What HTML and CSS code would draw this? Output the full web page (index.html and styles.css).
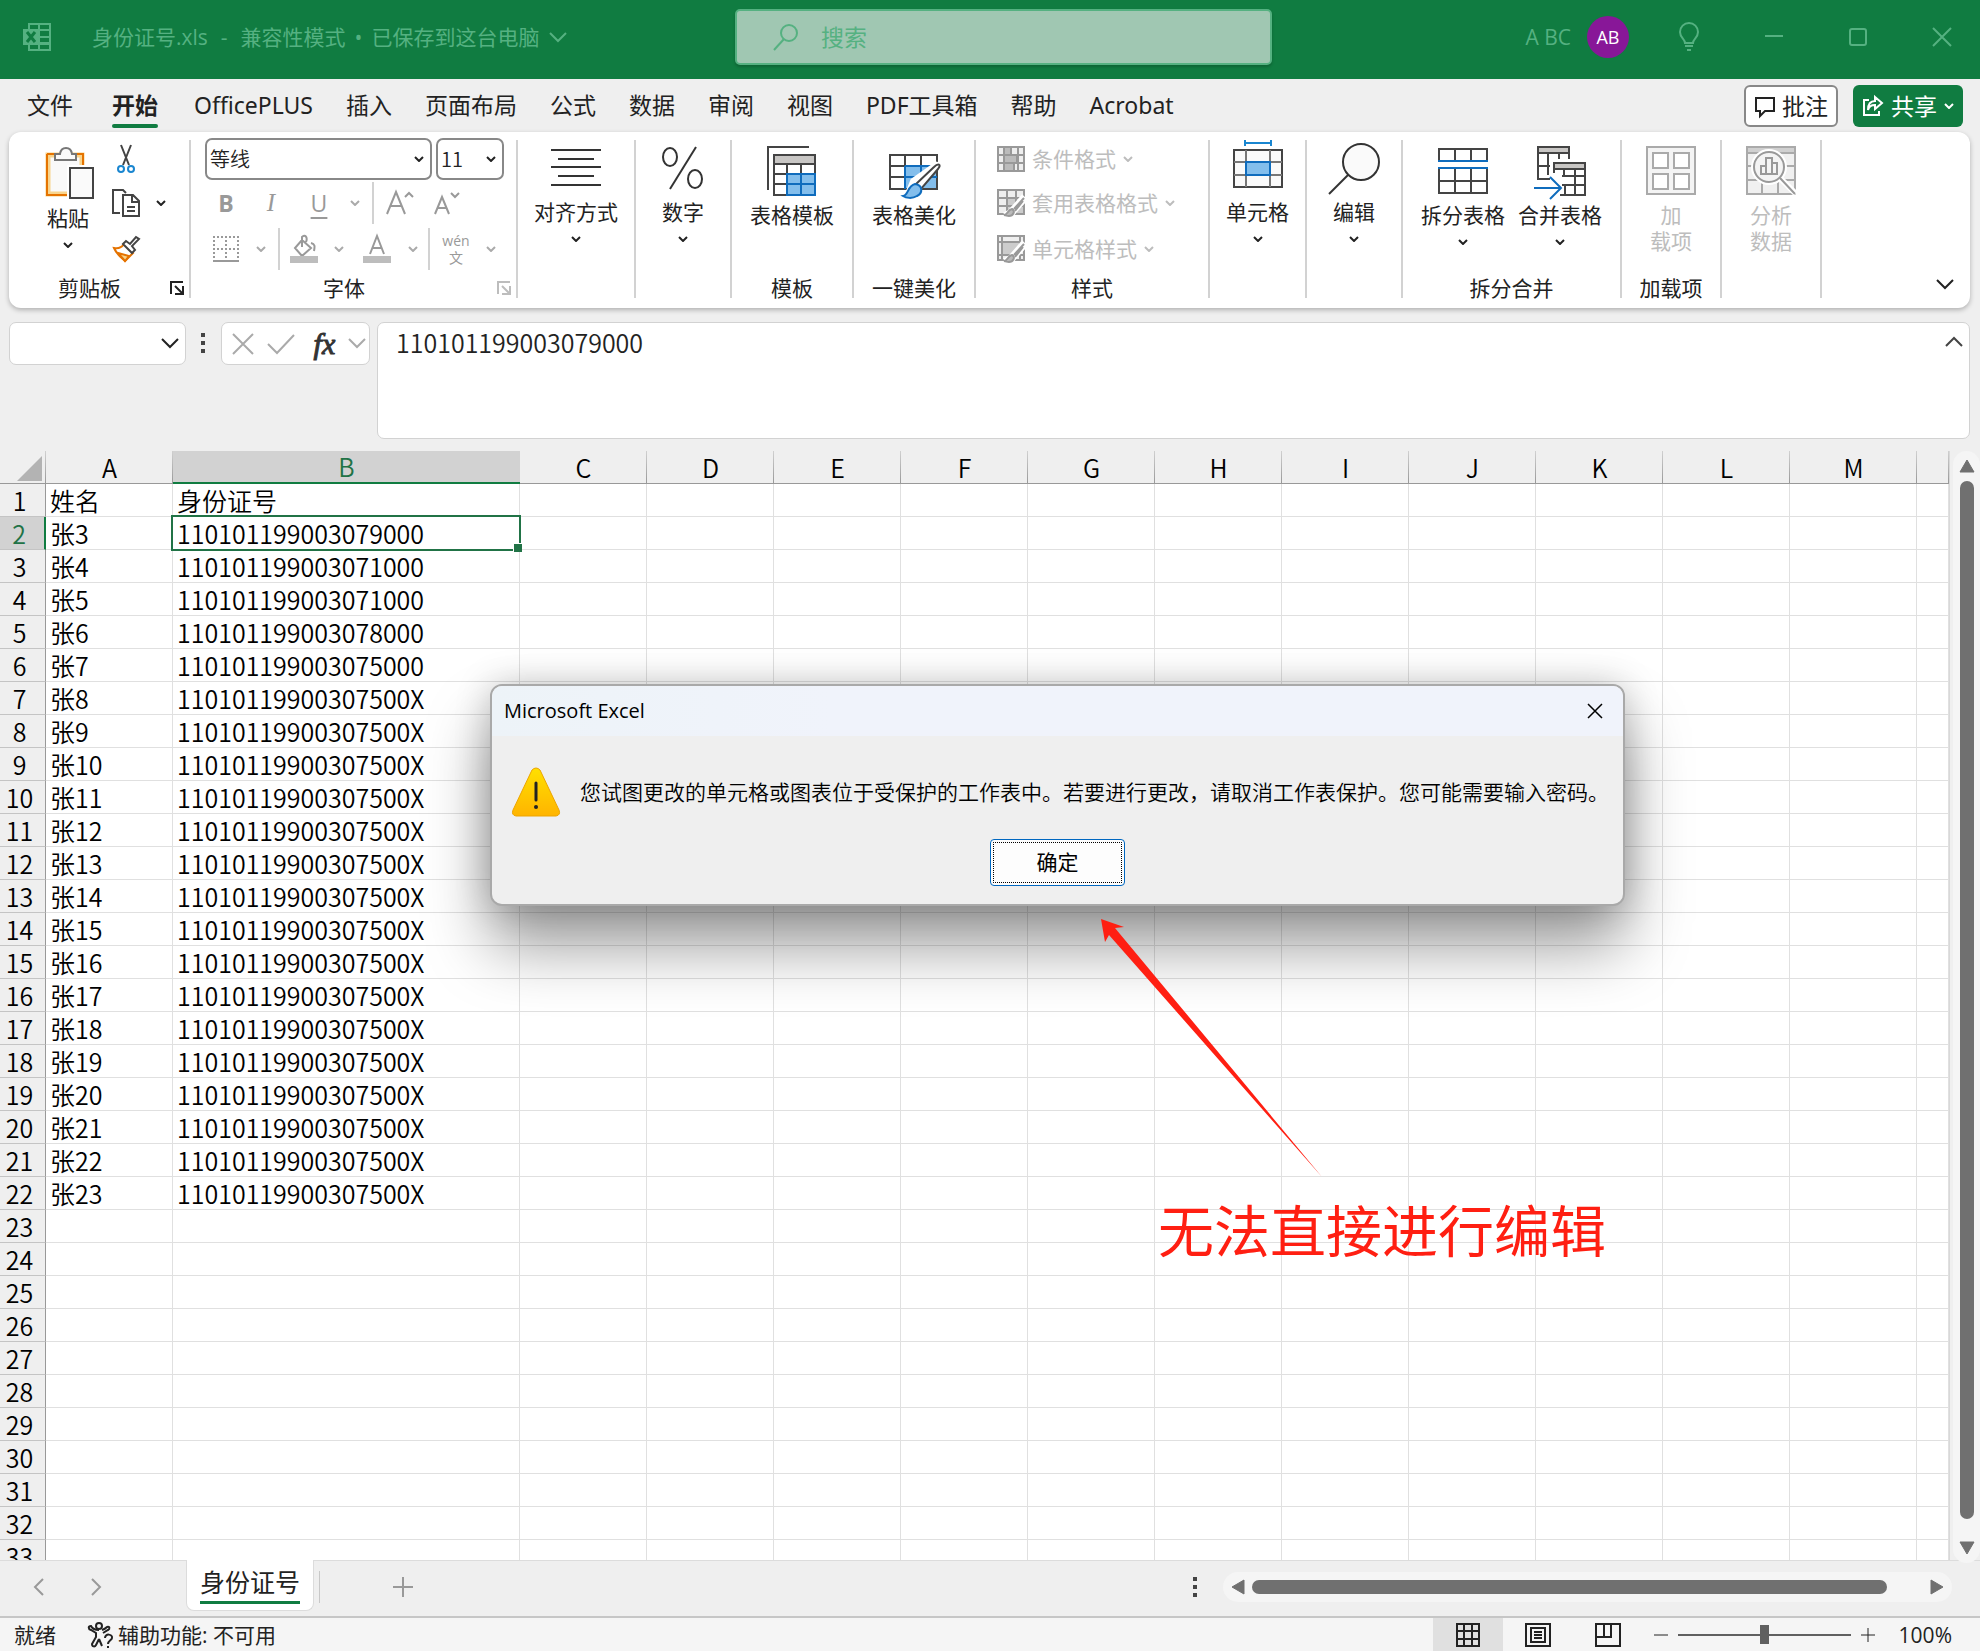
FILE: index.html
```html
<!DOCTYPE html>
<html lang="zh-CN">
<head>
<meta charset="utf-8">
<meta name="viewport" content="width=device-width, initial-scale=1">
<title>身份证号.xls</title>
<link rel="stylesheet" href="styles.css">
</head>
<body>
<svg class="defs" aria-hidden="true">
  <symbol id="chev" viewBox="0 0 10 6"><path d="M1 1l4 4 4-4" fill="none" stroke="currentColor" stroke-width="2"/></symbol>
  <symbol id="chev-wide" viewBox="0 0 18 11"><path d="M1 1l8 8 8-8" fill="none" stroke="currentColor" stroke-width="2"/></symbol>
  <symbol id="launch" viewBox="0 0 14 14"><path d="M1 13V1h12M5 5l7 7M13 5v8H5" fill="none" stroke="currentColor" stroke-width="2"/></symbol>
</svg>
<div class="app">
  <header class="titlebar">
    <svg class="logo" width="30" height="30" viewBox="0 0 30 30" fill="none" stroke="#55b181" stroke-width="2"><path d="M7 7V2h21v26H7v-6M17 2v26M7 8h21M17 15h11M17 21h11M7 22h21"/><path d="M1 7h16v16H1z" fill="#55b181" stroke="none"/><path d="M5 10l8 10M13 10L5 20" stroke="#107c41" stroke-width="3"/></svg>
    <div class="doc"><span>身份证号.xls</span><span class="dash">-</span><span>兼容性模式</span><span>•</span><span>已保存到这台电脑</span><svg width="18" height="11"><use href="#chev-wide"/></svg></div>
    <label class="search"><svg width="26" height="28" viewBox="0 0 26 28" fill="none" stroke="currentColor" stroke-width="2"><circle cx="16" cy="10" r="8"/><path d="M11 16L1 27"/></svg><input type="text" placeholder="搜索" aria-label="搜索"></label>
    <div class="account"><span>A BC</span><span class="avatar">AB</span>
      <button aria-label="提示"><svg width="22" height="30" viewBox="0 0 22 30" fill="none" stroke="currentColor" stroke-width="2"><path d="M7 21c0-4-5-5-5-11a9 9 0 0 1 18 0c0 6-5 7-5 11zM7 24h8M9 28h4"/></svg></button>
    </div>
    <div class="window">
      <button aria-label="最小化"><svg width="20" height="20" viewBox="0 0 20 20"><path d="M1 9h18" stroke="currentColor" stroke-width="2"/></svg></button>
      <button aria-label="最大化"><svg width="20" height="20" viewBox="0 0 20 20"><rect x="2" y="2" width="16" height="16" rx="2" fill="none" stroke="currentColor" stroke-width="2"/></svg></button>
      <button aria-label="关闭"><svg width="20" height="20" viewBox="0 0 20 20"><path d="M1 1l18 18M19 1L1 19" stroke="currentColor" stroke-width="2"/></svg></button>
    </div>
  </header>

  <nav class="tabs">
    <a href="#">文件</a><a href="#" class="active">开始</a><a href="#">OfficePLUS</a><a href="#">插入</a><a href="#">页面布局</a><a href="#">公式</a><a href="#">数据</a><a href="#">审阅</a><a href="#">视图</a><a href="#">PDF工具箱</a><a href="#">帮助</a><a href="#">Acrobat</a>
    <div class="actions">
      <button class="comment"><svg width="22" height="22" viewBox="0 0 22 22" fill="none" stroke="currentColor" stroke-width="2"><path d="M2 3h18v13h-9l-5 5v-5H2z"/></svg>批注</button>
      <button class="share"><svg width="22" height="22" viewBox="0 0 22 22" fill="none" stroke="currentColor" stroke-width="2"><path d="M7 5H2v15h15v-4M13 2l7 6-7 6v-4c-4 0-6 1-7 5 0-6 2-9 7-9z"/></svg>共享<svg width="10" height="6"><use href="#chev"/></svg></button>
    </div>
  </nav>

  <section class="ribbon">
    <div class="group clip">
      <div class="controls">
        <button class="big paste"><svg class="pic" width="60" height="58" viewBox="0 0 60 58"><path d="M10 15h34v39H10z" fill="#f9f9f9" stroke="#f8d48c" stroke-width="5"/><path d="M9 14h36v12M30 55H9V14" fill="none" stroke="#e57300" stroke-width="2"/><path d="M17 20v-6h5c1-8 11-8 12 0h4v6z" fill="#fafafa" stroke="#777" stroke-width="2"/><path d="M32 28h23v30H32z" fill="#fafafa" stroke="#fff" stroke-width="6"/><path d="M32 28h23v30H32z" fill="#fafafa" stroke="#444" stroke-width="2"/></svg><span>粘贴</span><svg width="10" height="6"><use href="#chev"/></svg></button>
        <div class="rows">
          <button aria-label="剪切"><svg width="28" height="28" viewBox="0 0 28 28" fill="none" stroke="#444" stroke-width="2"><path d="M9 0l8 20M19 0l-8 20"/><circle cx="9" cy="24" r="3" stroke="#1a86d0"/><circle cx="19" cy="24" r="3" stroke="#1a86d0"/></svg></button>
          <button aria-label="复制"><svg width="28" height="28" viewBox="0 0 28 28" fill="none" stroke="#444" stroke-width="2"><path d="M8 24H1V1h10l3 3M11 6h10l6 6v15H11zM20 6v7h7M15 18h8M15 22h8"/></svg><svg width="10" height="6"><use href="#chev"/></svg></button>
          <button aria-label="格式刷"><svg width="28" height="28" viewBox="0 0 28 28" stroke-width="2"><path d="M2 13c5 1 8-1 10-4l9 9c-3 3-5 5-8 8C9 22 5 20 2 13z" fill="#fff" stroke="#e57300"/><path d="M6 18l11 3-4 5z" fill="#f8d48c" stroke="#e57300"/><path d="M11 9l3-3 4 3 6-7 3 2-7 7 3 4-3 3z" fill="#fff" stroke="#444"/></svg></button>
        </div>
      </div>
      <div class="foot"><span>剪贴板</span><button aria-label="剪贴板设置"><svg width="14" height="14"><use href="#launch"/></svg></button></div>
    </div>

    <div class="group font">
      <div class="rows">
        <div class="boxes">
          <div class="combo name"><input type="text" value="等线" aria-label="字体"><svg width="10" height="6"><use href="#chev"/></svg></div>
          <div class="combo size"><input type="text" value="11" aria-label="字号"><svg width="10" height="6"><use href="#chev"/></svg></div>
        </div>
        <div class="line2">
          <button class="b">B</button><button class="i">I</button><button class="u">U</button><svg width="10" height="6"><use href="#chev"/></svg><i class="bar"></i>
          <button aria-label="增大字号"><svg width="28" height="26" viewBox="0 0 28 26" fill="none" stroke="currentColor" stroke-width="2"><path d="M1 24L10 2l9 22M4 16h12M19 7l4-4 4 4"/></svg></button>
          <button aria-label="减小字号"><svg width="28" height="26" viewBox="0 0 28 26" fill="none" stroke="currentColor" stroke-width="2"><path d="M3 24L10 7l7 17M5 18h10M19 3l4 4 4-4"/></svg></button>
        </div>
        <div class="line3">
          <button aria-label="边框"><svg width="28" height="28" viewBox="0 0 28 28" fill="none" stroke="currentColor" stroke-width="2"><path d="M1 2h26M2 1v24M26 1v24M14 1v24M1 14h26" stroke-dasharray="2 2"/><path d="M1 26h26"/></svg></button><svg width="10" height="6"><use href="#chev"/></svg><i class="bar"></i>
          <button aria-label="填充颜色"><svg width="28" height="28" viewBox="0 0 28 28" fill="none" stroke="currentColor" stroke-width="2"><path d="M12 5l9 8-9 8-7-8zM12 12V2c3-3 6 0 4 5M21 8c4 1 4 3 3 8"/><path d="M0 21h28v7H0z" fill="#bdbdbd" stroke="none"/></svg></button><svg width="10" height="6"><use href="#chev"/></svg>
          <button aria-label="字体颜色"><svg width="28" height="28" viewBox="0 0 28 28" fill="none" stroke="currentColor" stroke-width="2"><path d="M7 19L14 1l7 18M9 13h10"/><path d="M0 21h28v7H0z" fill="#bdbdbd" stroke="none"/></svg></button><svg width="10" height="6"><use href="#chev"/></svg><i class="bar"></i>
          <button class="wen"><span>wén</span><span>文</span></button><svg width="10" height="6"><use href="#chev"/></svg>
        </div>
      </div>
      <div class="foot"><span>字体</span><button class="off" aria-label="字体设置"><svg width="14" height="14"><use href="#launch"/></svg></button></div>
    </div>

    <div class="group w118"><button class="big"><svg class="pic" width="50" height="52" viewBox="0 0 50 52" stroke="#333" stroke-width="2"><path d="M0 10h50M7 19h36M0 27h50M7 36h36M0 45h50"/></svg><span>对齐方式</span><svg width="10" height="6"><use href="#chev"/></svg></button></div>
    <div class="group w96"><button class="big"><svg class="pic" width="44" height="52" viewBox="0 0 44 52" fill="none" stroke="#333" stroke-width="2"><ellipse cx="9" cy="17" rx="7" ry="9"/><ellipse cx="34" cy="39" rx="7" ry="9"/><path d="M35 7L9 49"/></svg><span>数字</span><svg width="10" height="6"><use href="#chev"/></svg></button></div>
    <div class="group w122"><button class="big"><svg class="pic" width="50" height="55" viewBox="0 0 50 55" fill="none" stroke="#444" stroke-width="2"><path d="M1 50V7h41"/><path d="M7 15h41v9H7z" fill="#c8c6c4"/><path d="M7 24h41v31H7zM7 34h41M7 44h41M20 24v31M34 24v31"/><path d="M20 34h28v21H20z" fill="#83beec" stroke="#0f6cbd"/><path d="M20 44h28M34 34v21" stroke="#0f6cbd"/></svg><span>表格模板</span></button><div class="foot"><span>模板</span></div></div>
    <div class="group w122"><button class="big"><svg class="pic" width="54" height="55" viewBox="0 0 54 55" fill="none" stroke="#444" stroke-width="2"><path d="M3 15h47v34H3zM3 26h47M3 37h47M18 15v34M34 15v34"/><path d="M18 26h32v23H18z" fill="#83beec"/><path d="M34 26v23M18 37h32M18 26h32M18 26v23" stroke="#0f6cbd"/><path d="M53 24L33 49 18 57l7-17 24-17z" fill="#fff" stroke="#fff" stroke-width="3"/><path d="M28 45L47 27c4-4 8-3 4 2L34 49z" fill="#fff"/><path d="M16 56c6-1 4-10 12-12 8 1 8 9 2 12-5 3-11 2-14 0z" fill="#83beec" stroke="#0f6cbd"/></svg><span>表格美化</span></button><div class="foot"><span>一键美化</span></div></div>
    <div class="group styles">
      <div class="rows">
        <button><svg width="28" height="26" viewBox="0 0 28 26" fill="none" stroke="#999" stroke-width="2"><path d="M1 1h26v24H1z" fill="#eee"/><path d="M7 1h7v8H7zM7 9h13v8H7zM7 17h10v8H7z" fill="#bbb"/><path d="M7 1v24M21 1v24M1 9h26M1 17h26"/></svg>条件格式<svg width="10" height="6"><use href="#chev"/></svg></button>
        <button><svg width="28" height="28" viewBox="0 0 28 28" fill="none" stroke="#999" stroke-width="2"><path d="M1 1h26v24H1z" fill="#eee"/><path d="M10 9h17v16H10z" fill="#ccc"/><path d="M10 1v24M19 1v24M1 9h26M1 17h26"/><path d="M28 8L14 24l-6 3" stroke="#fff" stroke-width="8"/><path d="M27 9L17 20M26 12l-8 10"/><path d="M7 26c4 0 3-5 8-6 4 2 1 7-3 7z" fill="#bbb"/></svg>套用表格格式<svg width="10" height="6"><use href="#chev"/></svg></button>
        <button><svg width="28" height="28" viewBox="0 0 28 28" fill="none" stroke="#999" stroke-width="2"><path d="M1 1h26v24H1z" fill="#eee"/><path d="M5 7h18v13H5z" fill="#ccc"/><path d="M5 1v24M23 1v24M1 7h26M1 20h26"/><path d="M28 8L14 24l-6 3" stroke="#fff" stroke-width="8"/><path d="M27 9L17 20M26 12l-8 10"/><path d="M7 26c4 0 3-5 8-6 4 2 1 7-3 7z" fill="#bbb"/></svg>单元格样式<svg width="10" height="6"><use href="#chev"/></svg></button>
      </div>
      <div class="foot"><span>样式</span></div>
    </div>
    <div class="group w97"><button class="big"><svg class="pic" width="50" height="52" viewBox="0 0 50 52" fill="none" stroke="#444" stroke-width="2"><path d="M12 0v6M38 0v6M12 3h26" stroke="#1a86d0"/><path d="M1 10h48v37H1z" fill="#fafafa"/><path d="M13 10v37M37 10v37M1 22h48M1 35h48" stroke="#777"/><path d="M13 22h24v13H13z" fill="#83beec" stroke="#0f6cbd"/></svg><span>单元格</span><svg width="10" height="6"><use href="#chev"/></svg></button></div>
    <div class="group w96"><button class="big"><svg class="pic" width="52" height="52" viewBox="0 0 52 52" fill="#fafafa" stroke="#333" stroke-width="2"><circle cx="33" cy="22" r="18"/><path d="M20 35L1 54"/></svg><span>编辑</span><svg width="10" height="6"><use href="#chev"/></svg></button></div>
    <div class="group w219">
      <div class="pair">
        <button class="big"><svg class="pic" width="50" height="55" viewBox="0 0 50 55" fill="none" stroke="#444" stroke-width="2"><path d="M1 21V9h48v12M17 9v12M33 9v12M1 29v24h48V29M1 41h48M17 29v24M33 29v24"/><path d="M0 21h50M0 28h50" stroke="#0f6cbd"/></svg><span>拆分表格</span><svg width="10" height="6"><use href="#chev"/></svg></button>
        <button class="big"><svg class="pic" width="52" height="55" viewBox="0 0 52 55" fill="none" stroke="#444" stroke-width="2"><path d="M4 7h31v6H4z" fill="#c8c6c4"/><path d="M16 39H4V7h31v12M4 26h12M14 13v22M25 13v6"/><path d="M20 23h31v6H20z" fill="#c8c6c4"/><path d="M20 33V23h31v32H26M28 36h23M28 45h23M30 29v7M41 29v26M31 45v10"/><path d="M0 48h26M16 37l11 11-11 11" stroke="#0f6cbd"/></svg><span>合并表格</span><svg width="10" height="6"><use href="#chev"/></svg></button>
      </div>
      <div class="foot"><span>拆分合并</span></div>
    </div>
    <div class="group w100"><button class="big off"><svg class="pic" width="50" height="55" viewBox="0 0 50 55" fill="none" stroke="#aaa" stroke-width="2"><path d="M1 7h48v47H1z" fill="#f4f4f4"/><path d="M7 13h15v15H7zM28 13h15v15H28zM7 34h15v15H7zM28 34h15v15H28z" fill="#fff"/></svg><span>加<br>载项</span></button><div class="foot"><span>加载项</span></div></div>
    <div class="group w100"><button class="big off"><svg class="pic" width="50" height="55" viewBox="0 0 50 55" fill="none" stroke="#aaa" stroke-width="2"><path d="M1 7h48v47H1z" fill="#f0f0f0"/><path d="M1 7h48v6H1z" fill="#d0d0d0"/><path d="M1 26h48M1 40h48M16 40v14M32 40v14"/><circle cx="23" cy="27" r="15" fill="#fafafa" stroke="#fff" stroke-width="6"/><path d="M34 38l16 16" stroke="#fff" stroke-width="6"/><circle cx="23" cy="27" r="15" fill="#f4f4f4" stroke="#999"/><path d="M34 38l15 16M15 26h5v8h-5zM20 18h6v16h-6zM26 23h5v11h-5z" stroke="#999"/></svg><span>分析<br>数据</span></button></div>
    <button class="collapse" aria-label="折叠功能区"><svg width="18" height="11"><use href="#chev-wide"/></svg></button>
  </section>

  <section class="formula">
    <div class="namebox"><input type="text" aria-label="名称框"><svg width="18" height="11"><use href="#chev-wide"/></svg></div>
    <svg class="dots" width="4" height="20" viewBox="0 0 4 20" fill="#444"><path d="M0 0h4v4H0zM0 8h4v4H0zM0 16h4v4H0z"/></svg>
    <div class="fxbox">
      <button aria-label="取消"><svg width="22" height="22" viewBox="0 0 22 22"><path d="M1 1l20 20M21 1L1 21" stroke="currentColor" stroke-width="2"/></svg></button>
      <button aria-label="输入"><svg width="28" height="20" viewBox="0 0 28 20"><path d="M1 10l9 9L27 1" fill="none" stroke="currentColor" stroke-width="2"/></svg></button>
      <button class="fx">fx</button>
      <svg width="18" height="11"><use href="#chev-wide"/></svg>
    </div>
    <div class="entry"><textarea aria-label="编辑栏" spellcheck="false">110101199003079000</textarea><button aria-label="折叠编辑栏"><svg width="18" height="11" viewBox="0 0 18 11"><path d="M1 10l8-8 8 8" fill="none" stroke="#444" stroke-width="2"/></svg></button></div>
  </section>

  <main class="sheet">
    <div class="gridwrap"><table id="grid"></table></div>
    <div class="vscroll">
      <svg width="16" height="14" viewBox="0 0 16 14"><path d="M8 1l7 12H1z" fill="#707070" stroke="#707070" stroke-linejoin="round"/></svg>
      <div class="thumb"></div>
      <svg width="16" height="14" viewBox="0 0 16 14"><path d="M8 13l7-12H1z" fill="#707070" stroke="#707070" stroke-linejoin="round"/></svg>
    </div>

    <div class="alert" role="alertdialog" aria-labelledby="alert-title">
      <div class="alert-head"><span id="alert-title">Microsoft Excel</span><button aria-label="关闭"><svg width="16" height="16" viewBox="0 0 16 16"><path d="M1 1l14 14M15 1L1 15" stroke="#000" stroke-width="1.5"/></svg></button></div>
      <div class="alert-body">
        <svg width="50" height="50" viewBox="0 0 50 50"><defs><linearGradient id="warn" x1="0" y1="0" x2="0" y2="1"><stop offset="0" stop-color="#ffe000"/><stop offset="1" stop-color="#ffb400"/></linearGradient></defs><path d="M21 3q4-4 8 0l19 40q2 5-3 6H5q-5-1-3-6z" fill="url(#warn)" stroke="#eda500"/><path d="M25 16v17" stroke="#222" stroke-width="3" stroke-linecap="round"/><circle cx="25" cy="40" r="2" fill="#222"/></svg>
        <p>您试图更改的单元格或图表位于受保护的工作表中。若要进行更改，请取消工作表保护。您可能需要输入密码。</p>
      </div>
      <button class="ok">确定</button>
    </div>

    <svg class="arrow" width="230" height="262" viewBox="0 0 230 262"><path d="M1 1l23 8-9 1L222 259 9 17l-4 7z" fill="#ff1f12"/></svg>
    <p class="note">无法直接进行编辑</p>
  </main>

  <section class="sheettabs">
    <button class="prev" aria-label="上一个"><svg width="10" height="18" viewBox="0 0 10 18"><path d="M9 1L1 9l8 8" fill="none" stroke="currentColor" stroke-width="2"/></svg></button>
    <button class="next" aria-label="下一个"><svg width="10" height="18" viewBox="0 0 10 18"><path d="M1 1l8 8-8 8" fill="none" stroke="currentColor" stroke-width="2"/></svg></button>
    <a href="#" class="sheettab"><span>身份证号</span></a>
    <i class="bar"></i>
    <button class="add" aria-label="新工作表"><svg width="20" height="20" viewBox="0 0 20 20"><path d="M0 10h20M10 0v20" stroke="currentColor" stroke-width="2"/></svg></button>
    <svg class="dots" width="4" height="20" viewBox="0 0 4 20" fill="#444"><path d="M0 0h4v4H0zM0 8h4v4H0zM0 16h4v4H0z"/></svg>
    <div class="hscroll">
      <svg width="14" height="16" viewBox="0 0 14 16"><path d="M1 8l12-7v14z" fill="#707070" stroke="#707070" stroke-linejoin="round"/></svg>
      <div class="thumb"></div>
      <svg width="14" height="16" viewBox="0 0 14 16"><path d="M13 8L1 1v14z" fill="#707070" stroke="#707070" stroke-linejoin="round"/></svg>
    </div>
  </section>

  <footer class="status">
    <span class="ready">就绪</span>
    <svg width="26" height="26" viewBox="0 0 26 26" fill="none" stroke="#222" stroke-width="2"><circle cx="11" cy="4" r="3"/><path d="M11 8C7 8 4 6 3 4 0 4 0 7 3 8l5 3v4L4 22c0 3 3 3 4 1l3-6M14 8c3-1 4-2 5-3 3-1 3 2 1 3l-5 3M17 16c0-5 8-4 7 0 0 2-4 3-4 6M20 24v2M11 17l3 7"/></svg>
    <span class="access">辅助功能: 不可用</span>
    <div class="views">
      <button class="on" aria-label="普通"><svg width="24" height="24" viewBox="0 0 24 24" fill="none" stroke="#222" stroke-width="2"><path d="M1 1h22v22H1zM1 8h22M1 16h22M8 1v22M16 1v22"/></svg></button>
      <button aria-label="页面布局"><svg width="26" height="24" viewBox="0 0 26 24" fill="none" stroke="#222" stroke-width="2"><path d="M1 1h24v22H1zM6 5h14v14H6zM9 9h8M9 12h8M9 15h8"/></svg></button>
      <button aria-label="分页预览"><svg width="26" height="24" viewBox="0 0 26 24" fill="none" stroke="#222" stroke-width="2"><path d="M1 1h24v22H1zM1 14h15V1M9 1v13"/></svg></button>
    </div>
    <button class="minus" aria-label="缩小"><svg width="14" height="14" viewBox="0 0 14 14"><path d="M0 7h14" stroke="#222"/></svg></button>
    <input class="zoom" type="range" min="0" max="100" value="50" aria-label="缩放">
    <button class="plus" aria-label="放大"><svg width="14" height="14" viewBox="0 0 14 14"><path d="M0 7h14M7 0v14" stroke="#222"/></svg></button>
    <span class="percent">100%</span>
  </footer>
</div>
<script src="script.js"></script>
</body>
</html>
```
FILE: script.js
```js
const letters = "ABCDEFGHIJKLM".split("");
const ids = ["110101199003079000", "110101199003071000", "110101199003071000", "110101199003078000", "110101199003075000"];
const rowCount = 33;

// Row 1 holds the headings, rows 2-22 hold one person each.
function cellText(row, col) {
  if (col > 1) return "";
  if (row === 1) return col === 0 ? "姓名" : "身份证号";
  if (row > 22) return "";
  return col === 0 ? "张" + (row + 1) : ids[row - 2] || "11010119900307500X";
}

let html = '<colgroup><col class="c-num"><col class="c-std"><col class="c-wide">';
html += '<col class="c-std">'.repeat(11) + "<col></colgroup>";
html += '<thead><tr><th class="corner"></th>';
html += letters.map((l) => `<th scope="col"${l === "B" ? ' class="sel"' : ""}>${l}</th>`).join("");
html += "<th></th></tr></thead><tbody>";
for (let r = 1; r <= rowCount; r++) {
  html += `<tr><th scope="row"${r === 2 ? ' class="sel"' : ""}>${r}</th>`;
  for (let c = 0; c < 14; c++) {
    html += `<td${r === 2 && c === 1 ? ' class="current"' : ""}>${cellText(r, c)}</td>`;
  }
  html += "</tr>";
}
document.getElementById("grid").innerHTML = html + "</tbody>";
```
FILE: styles.css
```css
* { box-sizing: border-box; }
body { margin: 0; background: #efefef; color: #222; font-family: "Open Sans", "Noto Sans CJK SC", sans-serif; font-size: 21px; line-height: 28px; }
button, input, textarea { font: inherit; color: inherit; margin: 0; padding: 0; border: 0; background: none; outline: none; }
button { display: flex; align-items: center; justify-content: center; white-space: nowrap; }
a { color: inherit; text-decoration: none; }
svg { display: block; flex: none; overflow: visible; }
p { margin: 0; }
.defs { position: absolute; width: 0; height: 0; }
.app { display: flex; flex-direction: column; height: 100vh; overflow: hidden; }

.titlebar { display: grid; grid-template-columns: 735px 537px 1fr auto; align-items: center; position: relative; height: 79px; padding-bottom: 5px; background: #107c41; color: #55b181; flex: none; }
.logo { grid-row: 1; grid-column: 1; margin-left: 22px; }
.doc { grid-row: 1; grid-column: 1; display: flex; align-items: center; gap: 9px; margin-left: 92px; white-space: nowrap; }
.dash { padding: 0 4px; }
.search { display: flex; align-items: center; gap: 22px; height: 56px; padding-left: 36px; background: #a0c7b2; border: 2px solid #55b181; border-radius: 5px; box-shadow: 0 2px 3px #0003; font-size: 23px; }
.search input { width: 300px; }
.search input::placeholder { color: #55b181; opacity: 1; }
.account { display: flex; align-items: center; justify-content: flex-end; gap: 16px; margin-right: 13px; }
.account button { width: 60px; margin-left: 14px; }
.avatar { width: 42px; height: 42px; line-height: 42px; border-radius: 50%; background: #881798; color: #fff; text-align: center; font-size: 18px; }
.window { display: flex; margin-right: -4px; }
.window button { width: 84px; height: 60px; }

.tabs { display: flex; align-items: center; gap: 33px; height: 53px; padding: 0 17px 0 27px; font-family: "Noto Sans", "Noto Sans CJK SC", sans-serif; font-size: 23px; flex: none; white-space: nowrap; }
.tabs a { height: 44px; line-height: 42px; }
.tabs .active { margin: 0 3px 0 6px; font-weight: 700; position: relative; }
.tabs .active::after { content: ""; position: absolute; left: 0; right: 0; bottom: 0; height: 4px; border-radius: 2px; background: #107c41; }
.actions { margin-left: auto; display: flex; gap: 15px; }
.actions button { height: 42px; gap: 6px; padding: 0 8px; border-radius: 6px; }
.actions .comment { border: 2px solid #888; background: #fff; }
.actions .share { background: #107c41; color: #fff; gap: 7px; padding: 0 9px; }

.ribbon { display: flex; align-items: stretch; margin: 0 10px 0 9px; height: 176px; padding: 8px 0 10px; background: #fff; border-radius: 12px; box-shadow: 0 2px 5px #0004; position: relative; flex: none; white-space: nowrap; }
.group { display: flex; flex-direction: column; align-items: center; border-right: 2px solid #d2d2d2; flex: none; }
.foot { display: flex; align-items: center; justify-content: center; align-self: stretch; margin-top: auto; height: 20px; }
.foot span { flex: 1; text-align: center; }
.foot button { margin-right: 5px; }
.off, .off svg { color: #bdbdbd; }
.clip { width: 182px; }
.font { width: 327px; }
.w118 { width: 118px; } .w96 { width: 96px; } .w122 { width: 122px; } .w97 { width: 97px; } .w100 { width: 100px; }
.w219 { width: 219px; }
.styles { width: 234px; }
.controls { display: flex; align-self: stretch; padding-left: 29px; gap: 14px; }
.big { flex-direction: column; justify-content: flex-start; }
.big span { margin: 7px 0 11px; line-height: 26px; }
.pair { display: flex; gap: 13px; }
.rows { display: grid; grid-template-rows: 38px 50px 42px; }
.rows > * { display: flex; align-items: center; }
.clip .rows button { gap: 16px; justify-content: flex-start; }
.font .rows { color: #999; align-self: stretch; padding-left: 14px; }
.font .rows > div > svg { color: #aaa; }
.boxes { gap: 4px; }
.combo { display: flex; align-items: center; height: 42px; padding: 0 6px 0 3px; border: 2px solid #888; border-radius: 7px; color: #222; font-family: "Noto Sans CJK SC", sans-serif; font-size: 20px; font-weight: 350; }
.combo input { flex: 1; min-width: 0; }
.name { width: 227px; }
.size { width: 68px; }
.rows .line2, .rows .line3 { display: grid; justify-items: center; }
.rows .line2 { grid-template-columns: 42px 48px 48px 24px 12px 42px 50px; }
.rows .line3 { grid-template-columns: 42px 28px 8px 42px 28px 48px 24px 8px 46px 24px; }
.bar { width: 2px; height: 42px; background: #d2d2d2; }
.b { font-weight: 700; font-size: 23px; }
.i { font-family: "Liberation Serif", serif; font-style: italic; font-size: 25px; }
.u { text-decoration: underline; text-underline-offset: 5px; font-size: 23px; }
.wen { flex-direction: column; font-size: 14px; line-height: 17px; }
.styles .rows { align-self: stretch; padding-left: 21px; color: #bdbdbd; }
.styles .rows button { gap: 7px; justify-content: flex-start; }
.collapse { margin: auto 16px 8px auto; }

.formula { display: flex; align-items: flex-start; height: 117px; margin: 14px 10px 12px 9px; flex: none; }
.namebox, .fxbox, .entry { display: flex; background: #fff; border: 1px solid #d2d2d2; border-radius: 7px; }
.namebox { width: 177px; height: 43px; align-items: center; padding-right: 6px; }
.namebox input { flex: 1; min-width: 0; padding-left: 8px; }
.formula .dots { margin: 11px 16px 0 15px; }
.fxbox { width: 149px; height: 43px; align-items: center; justify-content: space-between; padding: 0 3px 0 10px; color: #aaa; }
.fx { padding-left: 6px; color: #333; font: italic 30px/36px "Liberation Serif", serif; -webkit-text-stroke: 1px #333; }
.entry { flex: 1; height: 117px; margin-left: 7px; padding: 3px 6px 4px 18px; align-items: flex-start; }
.entry textarea { flex: 1; height: 100px; resize: none; font: 350 25px/32px "Noto Sans CJK SC", sans-serif; }
.entry button { height: 30px; }

.sheet { flex: 1; min-height: 0; display: flex; position: relative; }
.gridwrap { flex: 1; overflow: hidden; border-right: 1px solid #d8d8d8; margin-right: 3px; }
table { width: 100%; table-layout: fixed; border-collapse: separate; border-spacing: 0; font: 350 25px/32px "Noto Sans CJK SC", sans-serif; color: #000; background: #fff; }
.c-num { width: 46px; } .c-std { width: 127px; } .c-wide { width: 347px; }
th, td { height: 33px; padding: 0; border-right: 1px solid #e0e0e0; border-bottom: 1px solid #e0e0e0; font-weight: 350; white-space: nowrap; }
td { padding-left: 4px; }
thead th { line-height: 31px; background: linear-gradient(#d0d0d0, #999) right / 1px 100% no-repeat #efefef; border-right: 0; border-bottom-color: #999; }
tbody th { background: #efefef; border-right-color: #999; border-bottom-color: #c4c4c4; padding-right: 6px; }
thead .sel { background: #d2d2d2; color: #217346; border-bottom: 2px solid #107c41; }
tbody .sel { background: #d2d2d2; color: #217346; border-right: 2px solid #107c41; }
.corner::after { content: ""; display: block; margin: 3px 4px 0 auto; width: 25px; height: 25px; background: #b3b3b3; clip-path: polygon(100% 0, 100% 100%, 0 100%); }
.current { position: relative; }
.current::before { content: ""; position: absolute; inset: -2px; border: 2px solid #217346; }
.current::after { content: ""; position: absolute; right: -3px; bottom: -3px; width: 8px; height: 8px; background: #217346; border: solid #fff; border-width: 1px 0 0 1px; }
.vscroll { width: 27px; margin-bottom: -3px; display: flex; flex-direction: column; align-items: center; gap: 8px; padding: 8px 0; background: #f5f5f5; border-radius: 14px; z-index: 1; }
.thumb { background: #707070; border-radius: 7px; }
.vscroll .thumb { width: 14px; flex: 1; margin-bottom: 14px; }

.alert { position: absolute; left: 490px; top: 233px; width: 1135px; border: 2px solid #a9a9a9; border-radius: 12px; background: #efefef; background-clip: padding-box; box-shadow: 0 40px 64px #0006, 0 0 36px #0003; color: #000; padding-bottom: 18px; }
.alert-head { display: flex; align-items: center; justify-content: space-between; height: 50px; padding: 0 20px 0 12px; background: linear-gradient(90deg, #edf3f8, #f0f3fb 30%); border-radius: 10px 10px 0 0; font-size: 20px; }
.alert-body { display: flex; align-items: center; gap: 19px; padding: 31px 0 22px 19px; font-family: "Noto Sans CJK SC", sans-serif; font-weight: 350; white-space: nowrap; }
.alert-body p { padding-bottom: 2px; }
.ok { width: 135px; height: 47px; margin: 0 auto; padding-bottom: 2px; background: #fdfdfd; border: 1px solid #0067c0; border-radius: 4px; outline: 1px dotted #000; outline-offset: -4px; }
.arrow { position: absolute; left: 1100px; top: 467px; }
.note { position: absolute; left: 1158px; top: 739px; font-size: 56px; line-height: 80px; color: #ff1f12; white-space: nowrap; }

.sheettabs { display: flex; align-items: center; height: 56px; padding: 0 28px 3px 34px; border-top: 1px solid #dcdcdc; color: #999; flex: none; }
.next { margin: 0 85px 0 47px; }
.sheettab { align-self: flex-start; margin-top: -1px; height: 51px; padding: 0 13px; background: #fff; border: 1px solid #dcdcdc; border-top: 0; border-radius: 0 0 8px 8px; color: #222; font-size: 25px; }
.sheettab span { display: block; padding-top: 3px; border-bottom: 3px solid #107c41; line-height: 38px; }
.sheettabs .bar { width: 1px; height: 32px; margin: 0 73px 0 5px; background: #c8c8c8; }
.sheettabs .dots { margin-left: auto; margin-right: 26px; }
.hscroll { display: flex; align-items: center; gap: 7px; width: 729px; height: 30px; padding: 0 8px; border-radius: 15px; background: #f5f5f5; }
.hscroll .thumb { height: 14px; flex: 1; margin-right: 36px; }

.status { display: flex; align-items: center; height: 35px; padding: 0 28px 0 14px; background: #f5f5f5; border-top: 2px solid #c6c6c6; flex: none; }
.ready { margin-right: 32px; }
.access { margin-left: 4px; }
.views { display: flex; margin-left: auto; margin-right: 11px; align-self: stretch; }
.views button { width: 70px; }
.views .on { background: #e0e0e0; }
.zoom { appearance: none; -webkit-appearance: none; width: 173px; height: 20px; margin: 0 10px; background: linear-gradient(#606060, #606060) center / 100% 2px no-repeat; }
.zoom::-webkit-slider-thumb { -webkit-appearance: none; width: 9px; height: 19px; background: #606060; }
.percent { margin-left: 24px; }
```
